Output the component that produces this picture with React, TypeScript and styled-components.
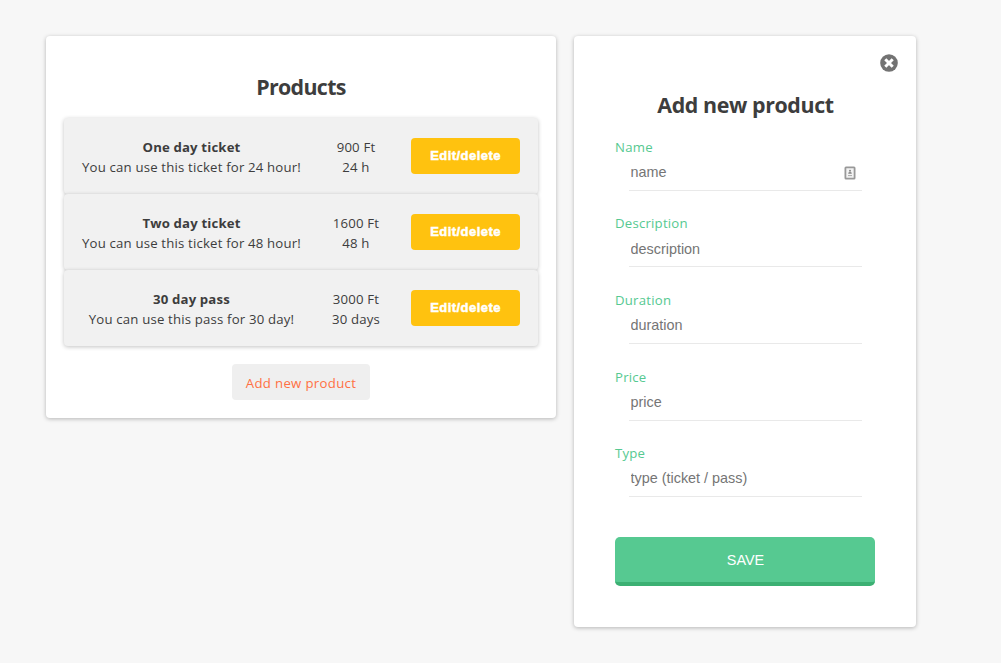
import React from "react";
import styled, { createGlobalStyle } from "styled-components";

const GlobalStyle = createGlobalStyle`
  * { box-sizing: border-box; }
  body {
    margin: 0;
    background: #f7f7f7;
    color: #3d3d3d;
    font-family: "Open Sans", "Noto Sans", sans-serif;
    font-size: 13.2px;
    line-height: 20px;
  }
  button, input { font-family: "Liberation Sans", Arial, sans-serif; }
`;

const Page = styled.main`
  display: flex;
  align-items: flex-start;
  gap: 18px;
  padding: 36px 46px;
`;

const Card = styled.section<{ $width: number; $height: number }>`
  width: ${(p) => p.$width}px;
  height: ${(p) => p.$height}px;
  flex: none;
  background: #fff;
  border-radius: 4px;
  box-shadow: 0 1px 4px rgba(0, 0, 0, 0.27);
`;

const ProductsCard = styled(Card)`
  display: flex;
  flex-direction: column;
  align-items: center;
  padding: 36px 18px 18px;
`;

const FormCard = styled(Card)`
  display: flex;
  flex-direction: column;
  padding: 18px 41px;
`;

const Title = styled.h2<{ $spacing: number }>`
  margin: 0;
  height: 30px;
  font-size: 21.4px;
  line-height: 30px;
  font-weight: 700;
  text-align: center;
  letter-spacing: ${(p) => p.$spacing}px;
`;

const FormTitle = styled(Title)`
  margin-top: 18px;
  padding-left: 1px;
`;

const List = styled.ul`
  list-style: none;
  width: 100%;
  margin: 16px 0 18px;
  padding: 0;
`;

const Row = styled.li`
  display: grid;
  grid-template-columns: 219px 110px 109px;
  align-items: center;
  height: 76px;
  padding: 2px 18px 0;
  background: #f1f1f1;
  border-radius: 4px;
  box-shadow: 0 1px 4px rgba(0, 0, 0, 0.24);
  text-align: center;
  white-space: nowrap;
`;

const Name = styled.div`
  font-weight: 700;
  letter-spacing: 0.15px;
`;

const Line = styled.div`
  letter-spacing: 0.18px;
`;

const EditButton = styled.button`
  height: 36px;
  margin-top: -2px;
  padding: 0 0 2px;
  border: 0;
  border-radius: 4px;
  background: #ffc20f;
  color: #fff;
  font-size: 13px;
  font-weight: 700;
  letter-spacing: 0.45px;
  -webkit-text-stroke: 0.5px #fff;
`;

const AddButton = styled.button`
  width: 138px;
  height: 36px;
  padding: 2px 0 0;
  border: 0;
  border-radius: 4px;
  background: #efefef;
  color: #ff7043;
  font-family: "Open Sans", "Noto Sans", sans-serif;
  font-size: 13.2px;
  letter-spacing: 0.32px;
`;

const CloseButton = styled.button`
  align-self: flex-end;
  display: flex;
  margin-right: -23px;
  padding: 0;
  border: 0;
  background: none;
`;

const Form = styled.form`
  display: flex;
  flex-direction: column;
  margin-top: 16.8px;
`;

const Field = styled.label`
  display: block;
  height: 76.6px;
  color: #56c991;
  letter-spacing: 0.22px;
`;

const InputLine = styled.span`
  display: flex;
  align-items: center;
  width: 233px;
  height: 34px;
  margin-left: 14px;
  padding: 0 6px 2.6px 1.5px;
  border-bottom: 1px solid #e9e9e9;
`;

const Input = styled.input`
  flex: 1;
  min-width: 0;
  padding: 0;
  border: 0;
  outline: 0;
  background: none;
  font-size: 14.4px;
  &::placeholder { color: #757575; opacity: 1; }
`;

const SaveButton = styled.button`
  height: 49.4px;
  margin-top: 17.2px;
  padding: 1px 0 0 1px;
  border: 0;
  border-bottom: 4px solid #3cb073;
  border-radius: 5px;
  background: #56c991;
  color: #fff;
  font-size: 14.4px;
`;

const CloseIcon = () => (
  <svg width="18" height="18" viewBox="0 0 18 18">
    <circle cx="9" cy="9" r="8.8" fill="#737373" />
    <path d="M5.3 5.3L12.7 12.7M12.7 5.3L5.3 12.7" stroke="#fff" strokeWidth="3" />
  </svg>
);

const ContactIcon = () => (
  <svg width="12" height="15" viewBox="0 -1 12 15">
    <rect x="1.4" y="1.4" width="9.2" height="11.2" rx="0.6" fill="#f3f3f3" stroke="#999" strokeWidth="1.8" />
    <circle cx="6" cy="4.7" r="1" fill="#858585" />
    <path d="M4.3 7.8V7Q4.3 5.9 6 5.9T7.7 7V7.8Z" fill="#858585" />
    <path d="M4 9.6H8" stroke="#a8a8a8" />
  </svg>
);

const products = [
  { name: "One day ticket", text: "You can use this ticket for 24 hour!", price: "900 Ft", duration: "24 h" },
  { name: "Two day ticket", text: "You can use this ticket for 48 hour!", price: "1600 Ft", duration: "48 h" },
  { name: "30 day pass", text: "You can use this pass for 30 day!", price: "3000 Ft", duration: "30 days" },
];

const fields = [
  { label: "Name", hint: "name", icon: true },
  { label: "Description", hint: "description" },
  { label: "Duration", hint: "duration" },
  { label: "Price", hint: "price" },
  { label: "Type", hint: "type (ticket / pass)" },
];

export default function App() {
  return (
    <>
      <GlobalStyle />
      <Page>
        <ProductsCard $width={510} $height={382}>
          <Title $spacing={-0.65}>Products</Title>
          <List>
            {products.map((p) => (
              <Row key={p.name}>
                <div>
                  <Name>{p.name}</Name>
                  <Line>{p.text}</Line>
                </div>
                <div>
                  <Line>{p.price}</Line>
                  <Line>{p.duration}</Line>
                </div>
                <EditButton type="button">Edit/delete</EditButton>
              </Row>
            ))}
          </List>
          <AddButton type="button">Add new product</AddButton>
        </ProductsCard>
        <FormCard $width={342} $height={591}>
          <CloseButton type="button" aria-label="Close">
            <CloseIcon />
          </CloseButton>
          <FormTitle $spacing={-0.4}>Add new product</FormTitle>
          <Form>
            {fields.map((f) => (
              <Field key={f.label}>
                {f.label}
                <InputLine>
                  <Input placeholder={f.hint} />
                  {f.icon && <ContactIcon />}
                </InputLine>
              </Field>
            ))}
            <SaveButton type="button">SAVE</SaveButton>
          </Form>
        </FormCard>
      </Page>
    </>
  );
}
